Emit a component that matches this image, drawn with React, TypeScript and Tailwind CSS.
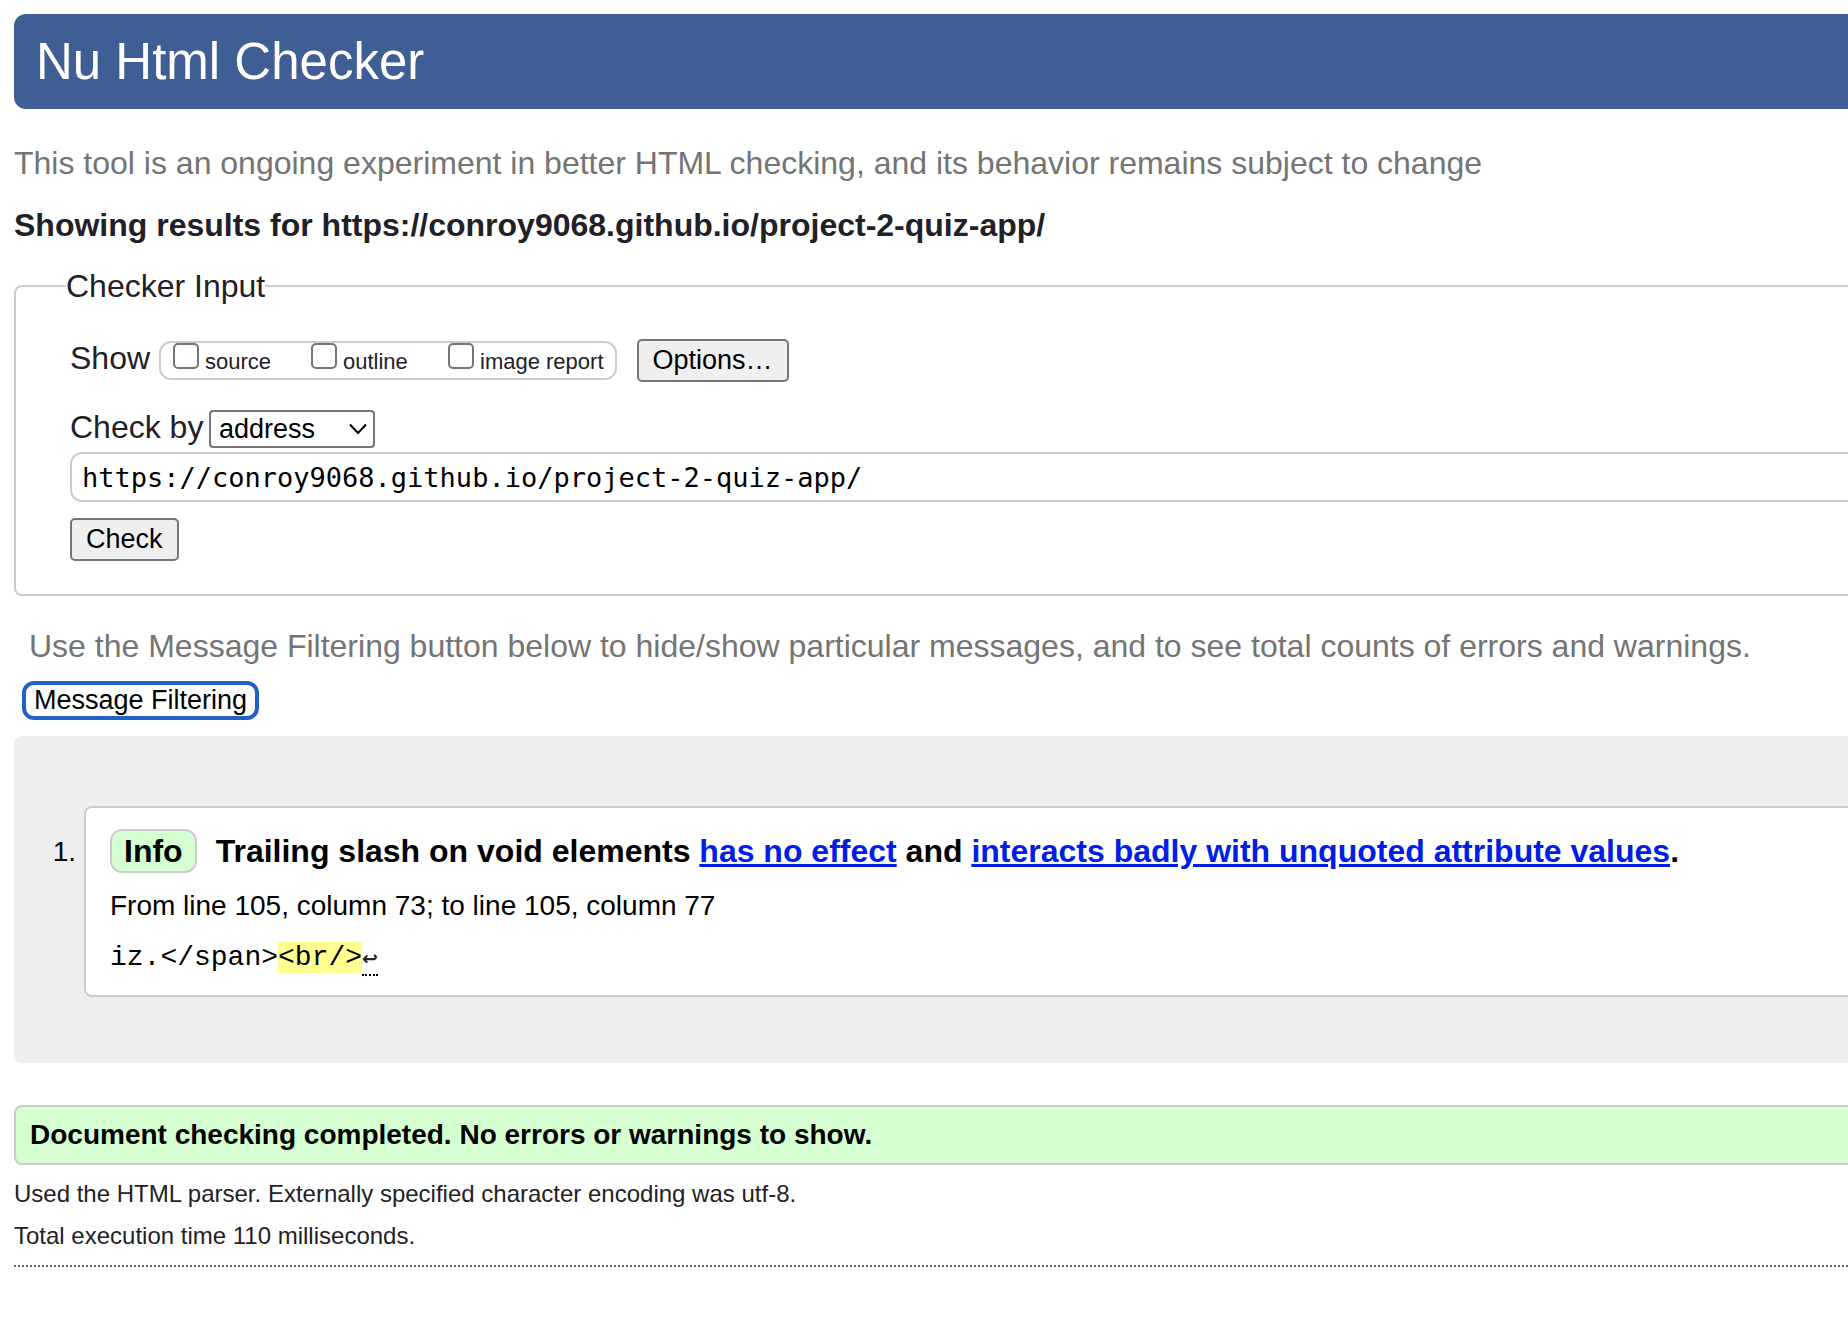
const showOptions = [
  { id: 'source', label: 'source', className: 'w-[138px]' },
  { id: 'outline', label: 'outline', className: 'w-[137px]' },
  { id: 'imagereport', label: 'image report', className: 'pr-[11px]' },
];

const buttonClass =
  'h-[43px] rounded-[5px] border-2 border-[#767676] bg-[#efefef] px-[14px] text-[27px] leading-none text-black';

function Header() {
  return (
    <header className="flex h-[95px] items-center rounded-l-xl bg-[#3f5e93] pl-[22px]">
      <h1 className="text-[51px] leading-none text-white">Nu Html Checker</h1>
    </header>
  );
}

function CheckerForm() {
  return (
    <form onSubmit={(e) => e.preventDefault()}>
      <fieldset className="mt-[22px] rounded-l-lg border-2 border-r-0 border-[#ccc] pb-[33px] pl-[54px]">
        <legend className="-ml-1 text-[32px] leading-[38px]">Checker Input</legend>
        <div className="mt-[34px] flex items-baseline">
          <span className="w-[89px] text-[32px] leading-none">Show</span>
          <div className="flex h-[39px] items-baseline rounded-xl border-2 border-[#ccc] pl-3">
            {showOptions.map((o) => (
              <div key={o.id} className={o.className}>
                <input
                  id={o.id}
                  type="checkbox"
                  className="size-[26px] appearance-none rounded-[5px] border-2 border-[#767676] bg-white align-baseline checked:bg-[#0075ff]"
                />
                <label htmlFor={o.id} className="ml-[6px] text-[22px] leading-none">
                  {o.label}
                </label>
              </div>
            ))}
          </div>
          <button type="button" className={`${buttonClass} ml-5`}>
            Options…
          </button>
        </div>
        <div className="mt-7 flex items-baseline">
          <label htmlFor="check-by" className="w-[139px] text-[32px] leading-none">
            Check by
          </label>
          <div className="relative">
            <select
              id="check-by"
              className="h-[38px] w-[166px] appearance-none rounded-[4px] border-2 border-[#767676] bg-white pl-2 text-[27px] leading-none text-black"
            >
              <option>address</option>
              <option>file upload</option>
              <option>text input</option>
            </select>
            <svg
              className="pointer-events-none absolute top-[13px] right-[7px] h-3 w-5"
              viewBox="0 0 20 12"
              fill="none"
              stroke="black"
              strokeWidth="2"
              aria-hidden="true"
            >
              <path d="M2 1.5l8 8.5 8-8.5" />
            </svg>
          </div>
        </div>
        <input
          type="text"
          aria-label="Address to check"
          defaultValue="https://conroy9068.github.io/project-2-quiz-app/"
          className="mt-1 block h-[50px] w-full rounded-l-xl border-2 border-r-0 border-[#ccc] bg-white pl-[10px] font-['DejaVu_Sans_Mono',monospace] text-[27px] text-black"
        />
        <button type="submit" className={`${buttonClass} mt-4 block`}>
          Check
        </button>
      </fieldset>
    </form>
  );
}

function Results() {
  return (
    <section className="mt-4 rounded-l-lg bg-[#eee] pt-[70px] pb-[66px] pl-[70px] text-black">
      <ol>
        <li className="relative rounded-l-lg border-2 border-r-0 border-[#ccc] bg-white pt-[21px] pb-[21px] pl-6">
          <span className="absolute top-7 right-full mr-[10px] text-[28px] leading-8">1.</span>
          <p className="flex items-center text-[32px] font-bold">
            <strong className="flex h-11 items-center rounded-xl border-2 border-[#ccc] bg-[#d5ffd0] px-3">
              Info
            </strong>
            <span className="ml-[19px] leading-10">
              Trailing slash on void elements{' '}
              <a href="#no-effect" className="text-[#001ee6] underline">
                has no effect
              </a>{' '}
              and{' '}
              <a href="#unquoted" className="text-[#001ee6] underline">
                interacts badly with unquoted attribute values
              </a>
              .
            </span>
          </p>
          <p className="mt-[17px] text-[28px] leading-8">From line 105, column 73; to line 105, column 77</p>
          <p className="mt-5 h-8 font-['Liberation_Mono',monospace] text-[28px] leading-8">
            <code className="font-[inherit]">
              iz.&lt;/span&gt;<mark className="bg-[#ffff90]">&lt;br/&gt;</mark>
              <span
                title="Line break"
                className="inline-block h-[34px] border-b-2 border-dotted border-black align-top font-['DejaVu_Sans',sans-serif] text-[19px] font-bold text-[#222]"
              >
                ↩
              </span>
            </code>
          </p>
        </li>
      </ol>
    </section>
  );
}

export default function App() {
  return (
    <main className="overflow-hidden bg-white pt-[14px] pl-[14px] font-['Liberation_Sans',Arial,sans-serif] text-[#1f2126]">
      <Header />
      <p className="mt-[34px] text-[32px] leading-10 text-[#747474]">
        This tool is an ongoing experiment in better HTML checking, and its behavior remains subject to change
      </p>
      <h2 className="mt-[22px] text-[32px] leading-10 font-bold">
        Showing results for https://conroy9068.github.io/project-2-quiz-app/
      </h2>
      <CheckerForm />
      <p className="mt-[30px] ml-[15px] text-[32px] leading-10 text-[#747474]">
        Use the Message Filtering button below to hide/show particular messages, and to see total counts of errors and
        warnings.
      </p>
      <button
        type="button"
        className="mt-[15px] ml-2 block h-[39px] rounded-xl border-4 border-[#2360c8] bg-white px-2 text-[27px] leading-none text-black"
      >
        Message Filtering
      </button>
      <Results />
      <p className="mt-[42px] flex h-[60px] items-center rounded-l-lg border-2 border-r-0 border-[#ccc] bg-[#d5ffd0] pl-[14px] text-[28px] font-bold text-black">
        Document checking completed. No errors or warnings to show.
      </p>
      <p className="mt-[15px] text-[24px] leading-7">
        Used the HTML parser. Externally specified character encoding was utf-8.
      </p>
      <p className="mt-[14px] text-[24px] leading-7">Total execution time 110 milliseconds.</p>
      <hr className="mt-[15px] border-t-2 border-dotted border-[#666]" />
    </main>
  );
}
